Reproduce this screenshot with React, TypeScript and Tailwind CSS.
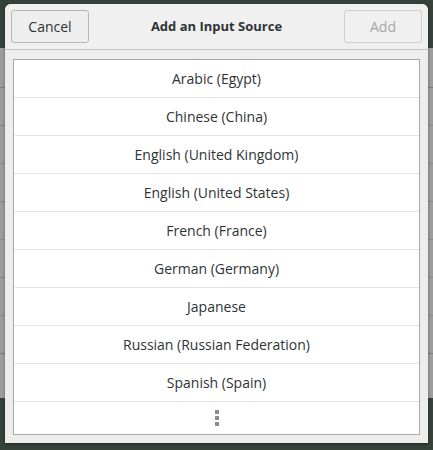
import React from 'react';

const sources = [
  'Arabic (Egypt)',
  'Chinese (China)',
  'English (United Kingdom)',
  'English (United States)',
  'French (France)',
  'German (Germany)',
  'Japanese',
  'Russian (Russian Federation)',
  'Spanish (Spain)',
];

const font = { fontFamily: '"Open Sans", "DejaVu Sans", sans-serif' };

export default function App() {
  return (
    <div className="relative w-[433px] h-[450px] overflow-hidden bg-[#34423b]" style={font}>
      {/* window behind the dialog */}
      <div className="absolute left-0 right-0 top-[48px] h-[350px] bg-[#9c9c9c] flex flex-col">
        <div className="h-[40px] border-b border-[#7d7d7d]" />
        <div className="h-[38px] border-b border-[#8a8a8a]" />
        <div className="h-[38px] border-b border-[#8a8a8a]" />
        <div className="h-[38px] border-b border-[#8a8a8a]" />
        <div className="h-[38px] border-b border-[#8a8a8a]" />
        <div className="h-[38px] border-b border-[#8a8a8a]" />
        <div className="h-[38px] border-b border-[#8a8a8a]" />
        <div className="h-[38px] border-b border-[#7a7a7a]" />
      </div>

      {/* dialog */}
      <div className="absolute left-[5px] top-[4px] w-[423px] h-[439px] bg-[#ededed] rounded-t-[6px] flex flex-col shadow-[0_1px_3px_rgba(0,0,0,0.4)]">
        <div className="h-[46px] flex items-center justify-between px-[6px] border-b border-[#c4c4c4] bg-[#f0f0f0] rounded-t-[6px]">
          <button className="w-[78px] h-[33px] rounded-[3px] border border-[#b6b6b6] bg-[#eeeeee] text-[14px] text-[#2e3436]">
            Cancel
          </button>
          <span className="text-[13px] font-bold text-[#2e3436]">Add an Input Source</span>
          <button className="w-[78px] h-[33px] rounded-[3px] border border-[#cfcfcf] bg-[#f0f0f0] text-[14px] text-[#a5a7a7]">
            Add
          </button>
        </div>
        <div className="flex-1 px-[8px] pt-[9px] pb-[8px]">
          <div className="h-full border border-[#a9a9a9] bg-white flex flex-col">
            {sources.map((s) => (
              <div
                key={s}
                className="h-[38px] shrink-0 flex items-center justify-center border-b border-[#e4e4e4] text-[14px] text-[#2e3436]"
              >
                {s}
              </div>
            ))}
            <div className="flex-1 flex flex-col items-center justify-center gap-[2px]">
              <span className="w-[4px] h-[4px] bg-[#8b8b8b]" />
              <span className="w-[4px] h-[4px] bg-[#8b8b8b]" />
              <span className="w-[4px] h-[4px] bg-[#8b8b8b]" />
            </div>
          </div>
        </div>
      </div>
    </div>
  );
}
